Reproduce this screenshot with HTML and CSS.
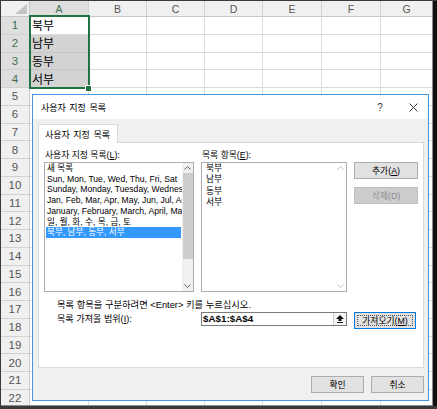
FILE: index.html
```html
<!DOCTYPE html>
<html lang="ko">
<head>
<meta charset="utf-8">
<title>사용자 지정 목록</title>
<link rel="stylesheet" href="styles.css">
</head>
<body>
<div class="frame">
  <div class="sheet">
    <div class="corner"><svg width="12" height="10" viewBox="0 0 12 10"><polygon points="12,0 12,10 0,10" fill="#c4c4c4"/></svg></div>
    <div class="ch sel">A</div><div class="ch">B</div><div class="ch">C</div><div class="ch">D</div><div class="ch">E</div><div class="ch">F</div><div class="ch">G</div>

    <div class="rh sel">1</div><div class="c txt">북부</div><div class="c"></div><div class="c"></div><div class="c"></div><div class="c"></div><div class="c"></div><div class="c"></div>
    <div class="rh sel">2</div><div class="c txt hl">남부</div><div class="c"></div><div class="c"></div><div class="c"></div><div class="c"></div><div class="c"></div><div class="c"></div>
    <div class="rh sel">3</div><div class="c txt hl">동부</div><div class="c"></div><div class="c"></div><div class="c"></div><div class="c"></div><div class="c"></div><div class="c"></div>
    <div class="rh sel">4</div><div class="c txt hl">서부</div><div class="c"></div><div class="c"></div><div class="c"></div><div class="c"></div><div class="c"></div><div class="c"></div>
    <div class="rh">5</div><div class="c"></div><div class="c"></div><div class="c"></div><div class="c"></div><div class="c"></div><div class="c"></div><div class="c"></div>
    <div class="rh">6</div><div class="c"></div><div class="c"></div><div class="c"></div><div class="c"></div><div class="c"></div><div class="c"></div><div class="c"></div>
    <div class="rh">7</div><div class="c"></div><div class="c"></div><div class="c"></div><div class="c"></div><div class="c"></div><div class="c"></div><div class="c"></div>
    <div class="rh">8</div><div class="c"></div><div class="c"></div><div class="c"></div><div class="c"></div><div class="c"></div><div class="c"></div><div class="c"></div>
    <div class="rh">9</div><div class="c"></div><div class="c"></div><div class="c"></div><div class="c"></div><div class="c"></div><div class="c"></div><div class="c"></div>
    <div class="rh">10</div><div class="c"></div><div class="c"></div><div class="c"></div><div class="c"></div><div class="c"></div><div class="c"></div><div class="c"></div>
    <div class="rh">11</div><div class="c"></div><div class="c"></div><div class="c"></div><div class="c"></div><div class="c"></div><div class="c"></div><div class="c"></div>
    <div class="rh">12</div><div class="c"></div><div class="c"></div><div class="c"></div><div class="c"></div><div class="c"></div><div class="c"></div><div class="c"></div>
    <div class="rh">13</div><div class="c"></div><div class="c"></div><div class="c"></div><div class="c"></div><div class="c"></div><div class="c"></div><div class="c"></div>
    <div class="rh">14</div><div class="c"></div><div class="c"></div><div class="c"></div><div class="c"></div><div class="c"></div><div class="c"></div><div class="c"></div>
    <div class="rh">15</div><div class="c"></div><div class="c"></div><div class="c"></div><div class="c"></div><div class="c"></div><div class="c"></div><div class="c"></div>
    <div class="rh">16</div><div class="c"></div><div class="c"></div><div class="c"></div><div class="c"></div><div class="c"></div><div class="c"></div><div class="c"></div>
    <div class="rh">17</div><div class="c"></div><div class="c"></div><div class="c"></div><div class="c"></div><div class="c"></div><div class="c"></div><div class="c"></div>
    <div class="rh">18</div><div class="c"></div><div class="c"></div><div class="c"></div><div class="c"></div><div class="c"></div><div class="c"></div><div class="c"></div>
    <div class="rh">19</div><div class="c"></div><div class="c"></div><div class="c"></div><div class="c"></div><div class="c"></div><div class="c"></div><div class="c"></div>
    <div class="rh">20</div><div class="c"></div><div class="c"></div><div class="c"></div><div class="c"></div><div class="c"></div><div class="c"></div><div class="c"></div>
    <div class="rh">21</div><div class="c"></div><div class="c"></div><div class="c"></div><div class="c"></div><div class="c"></div><div class="c"></div><div class="c"></div>
    <div class="rh">22</div><div class="c"></div><div class="c"></div><div class="c"></div><div class="c"></div><div class="c"></div><div class="c"></div><div class="c"></div>
  </div>

  <div class="selection"></div>
  <div class="handle"></div>

  <div class="dialog">
    <div class="titlebar">
      <span class="title">사용자 지정 목록</span>
      <span class="tbtn help">?</span>
      <span class="tbtn close"><svg width="9" height="9" viewBox="0 0 9 9"><path d="M0.5 0.5 L8.5 8.5 M8.5 0.5 L0.5 8.5" stroke="#333" stroke-width="1" fill="none"/></svg></span>
    </div>
    <div class="body">
      <div class="tabs"><div class="tab">사용자 지정 목록</div></div>
      <div class="panel">
        <div class="grid">
          <div class="lbl">사용자 지정 목록(<u>L</u>):</div>
          <div class="lbl">목록 항목(<u>E</u>):</div>
          <div></div>

          <div class="listbox">
            <div class="items">
              <div class="item">새 목록</div>
              <div class="item">Sun, Mon, Tue, Wed, Thu, Fri, Sat</div>
              <div class="item">Sunday, Monday, Tuesday, Wednesday, Thursday, Friday, Saturday</div>
              <div class="item">Jan, Feb, Mar, Apr, May, Jun, Jul, Aug, Sep, Oct, Nov, Dec</div>
              <div class="item">January, February, March, April, May, June, July</div>
              <div class="item">일, 월, 화, 수, 목, 금, 토</div>
              <div class="item selected">북부, 남부, 동부, 서부</div>
            </div>
            <div class="vscroll">
              <div class="arrow"><svg width="7" height="4" viewBox="0 0 7 4"><path d="M0.5 3.5 L3.5 0.5 L6.5 3.5" stroke="#606060" fill="none"/></svg></div>
              <div class="thumb"></div>
              <div class="track"></div>
              <div class="arrow"><svg width="7" height="4" viewBox="0 0 7 4"><path d="M0.5 0.5 L3.5 3.5 L6.5 0.5" stroke="#606060" fill="none"/></svg></div>
            </div>
          </div>

          <div class="listbox entries">
            <div class="lines">
              <div>북부</div>
              <div>남부</div>
              <div>동부</div>
              <div>서부</div>
            </div>
            <div class="vscroll off">
              <div class="arrow"><svg width="7" height="4" viewBox="0 0 7 4"><path d="M0.5 3.5 L3.5 0.5 L6.5 3.5" stroke="#c2c2c2" fill="none"/></svg></div>
              <div class="track"></div>
              <div class="arrow"><svg width="7" height="4" viewBox="0 0 7 4"><path d="M0.5 0.5 L3.5 3.5 L6.5 0.5" stroke="#c2c2c2" fill="none"/></svg></div>
            </div>
          </div>

          <div class="btncol">
            <div class="btn">추가(<u>A</u>)</div>
            <div class="btn disabled">삭제(D)</div>
          </div>
        </div>

        <div class="hint">목록 항목을 구분하려면 &lt;Enter&gt; 키를 누르십시오.</div>

        <div class="grid import">
          <div class="lbl indent">목록 가져올 범위(<u>I</u>):</div>
          <div class="refbox">
            <span class="reftext">$A$1:$A$4</span>
            <span class="collapse"><svg width="8" height="8" viewBox="0 0 8 8"><polygon points="4,0 8,4 5.5,4 5.5,6 2.5,6 2.5,4 0,4" fill="#111"/><rect x="1" y="7" width="6" height="1" fill="#111"/></svg></span>
          </div>
          <div class="btn focus"><span class="focusring">가져오기(<u>M</u>)</span></div>
        </div>
      </div>
      <div class="footer">
        <div class="btn wide">확인</div>
        <div class="btn wide">취소</div>
      </div>
    </div>
  </div>
</div>
</body>
</html>
```

FILE: styles.css
```css
* { box-sizing: border-box; }

body {
  margin: 0;
  width: 437px;
  height: 409px;
  overflow: hidden;
  background: #3a3a3a;
  font-family: "Liberation Sans", "Noto Sans CJK KR", sans-serif;
}

.frame {
  position: relative;
  margin: 1px 0 0 1px;
  width: 432px;
  height: 405px;
  overflow: hidden;
  background: #ffffff;
  border-right: 1px solid #8c8c8c;
  border-bottom: 1px solid #8c8c8c;
  box-shadow: 4px 0 0 #111;
}

.sheet {
  display: grid;
  grid-template-columns: 29px 59px 58px 58px 58px 59px 59px 52px;
  grid-template-rows: 16px repeat(22, 17.75px);
}

.corner {
  background: #f0f0f0;
  border-right: 1px solid #c9c9c9;
  border-bottom: 1px solid #c9c9c9;
  display: flex;
  align-items: flex-end;
  justify-content: flex-end;
  padding: 0 2px 2px 0;
}

.ch {
  background: #f0f0f0;
  border-right: 1px solid #d1d1d1;
  border-bottom: 1px solid #c9c9c9;
  color: #555;
  font-size: 10.5px;
  display: flex;
  align-items: center;
  justify-content: center;
}

.rh {
  background: #f0f0f0;
  border-right: 1px solid #c9c9c9;
  border-bottom: 1px solid #d1d1d1;
  color: #555;
  font-size: 11.5px;
  display: flex;
  align-items: center;
  justify-content: center;
}

.ch.sel, .rh.sel {
  background: #dedede;
  color: #3f6f52;
}

.c {
  border-right: 1px solid #dadada;
  border-bottom: 1px solid #dadada;
}

.txt {
  font-family: "Noto Sans CJK KR", sans-serif;
  font-size: 12px;
  color: #000;
  display: flex;
  align-items: center;
  padding-left: 2px;
  line-height: 1;
}

.hl { background: #d3d3d3; border-color: #c6c6c6; }

.selection {
  position: absolute;
  left: 28px;
  top: 14px;
  width: 61px;
  height: 74px;
  border: 2px solid #217346;
}

.handle {
  position: absolute;
  left: 84px;
  top: 84px;
  width: 7px;
  height: 7px;
  background: #217346;
  border: 1px solid #fff;
}

/* dialog */
.dialog {
  position: absolute;
  left: 31px;
  top: 93px;
  width: 397px;
  height: 307px;
  border: 1px solid #4697de;
  background: #fff;
  display: flex;
  flex-direction: column;
  color: #000;
  font-size: 8.8px;
}

.titlebar {
  height: 24px;
  display: flex;
  align-items: center;
  padding-left: 8px;
  padding-right: 9px;
  background: #fff;
}

.title { font-size: 9px; word-spacing: 1px; }

.tbtn {
  width: 12px;
  display: flex;
  justify-content: center;
  align-items: center;
  color: #333;
}

.help { margin-left: auto; font-size: 10px; margin-right: 21px; }

.body {
  flex: 1;
  background: #f0f0f0;
  padding: 5px 4px 7px 5px;
  display: flex;
  flex-direction: column;
}

.tabs { display: flex; height: 19px; margin-bottom: -1px; position: relative; z-index: 1; }

.tab {
  width: 80px;
  height: 19px;
  background: #fff;
  border: 1px solid #d9d9d9;
  border-bottom: none;
  padding-left: 6px;
  font-size: 9px;
  word-spacing: 1px;
  display: flex;
  align-items: center;
}

.panel {
  height: 226px;
  background: #fff;
  border: 1px solid #d9d9d9;
  padding: 6px 0 0 5px;
}

.grid {
  display: grid;
  grid-template-columns: 150px 146px 64px;
  column-gap: 7px;
  grid-template-rows: 13px 130px;
}

.lbl {
  padding-left: 1px;
  line-height: 12px;
  white-space: nowrap;
}

.listbox {
  position: relative;
  border: 1px solid #abadb3;
  background: #fff;
  display: flex;
  overflow: hidden;
}

.items {
  flex: 1;
  min-width: 0;
  padding: 0 0 0 1px;
  font-size: 8.6px;
  line-height: 10.7px;
}

.item {
  white-space: nowrap;
  overflow: hidden;
  padding-left: 1px;
}

.item.selected {
  background: #3399ff;
  color: #fff;
  margin-right: 1px;
}

.vscroll {
  width: 11px;
  display: flex;
  flex-direction: column;
  background: #f0f0f0;
}

.vscroll.off { background: #fff; }

.arrow {
  height: 10px;
  display: flex;
  align-items: center;
  justify-content: center;
}

.thumb {
  height: 86px;
  background: #cdcdcd;
  margin: 0 0 0 1px;
}

.track { flex: 1; }

.lines {
  flex: 1;
  padding: 0 0 0 4px;
  font-size: 8.8px;
  line-height: 11.3px;
}

.btncol {
  display: flex;
  flex-direction: column;
  gap: 8px;
}

.btn {
  height: 17px;
  background: #e1e1e1;
  border: 1px solid #adadad;
  display: flex;
  align-items: center;
  justify-content: center;
  font-size: 8.8px;
  white-space: nowrap;
}

.btn.disabled {
  background: #cccccc;
  border-color: #bfbfbf;
  color: #8d8d8d;
}

.hint {
  margin-top: 7px;
  padding-left: 13px;
  line-height: 12px;
  font-size: 9.3px;
  white-space: nowrap;
}

.import {
  margin-top: 1px;
  grid-template-rows: 17px;
}

.indent { padding-left: 13px; line-height: 14px; font-size: 9.1px; }

.refbox {
  height: 14px;
  border: 1px solid #7a7a7a;
  background: #fff;
  display: flex;
  align-items: stretch;
}

.reftext {
  flex: 1;
  padding-left: 1px;
  font-weight: bold;
  font-size: 9.8px;
  line-height: 12px;
}

.collapse {
  width: 13px;
  border-left: 1px solid #c8c8c8;
  background: #f4f4f4;
  display: flex;
  align-items: center;
  justify-content: center;
}

.btn.focus {
  border-color: #0078d7;
  width: 62px;
  padding: 2px;
}

.focusring {
  flex: 1;
  height: 100%;
  border: 1px dotted #555;
  display: flex;
  align-items: center;
  justify-content: center;
}

.footer {
  margin-top: 8px;
  display: flex;
  justify-content: flex-end;
  gap: 7px;
}

.btn.wide { width: 53px; }
```
